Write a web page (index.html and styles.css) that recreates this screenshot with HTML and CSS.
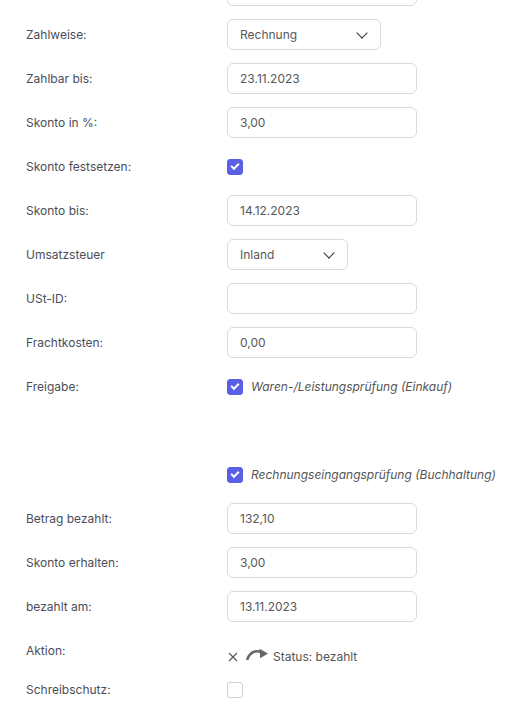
FILE: index.html
```html
<!DOCTYPE html>
<html lang="de">
<head>
    <meta charset="UTF-8">
    <meta name="viewport" content="width=device-width, initial-scale=1.0">
    <title>Rechnung bearbeiten</title>
    <link rel="stylesheet" href="styles.css">
</head>
<body>
    <div class="form">
        <div class="row">
            <label class="label"></label>
            <div class="field"></div>
        </div>

        <div class="row">
            <label class="label">Zahlweise:</label>
            <div class="field select wide">Rechnung <span class="chevron"></span></div>
        </div>

        <div class="row">
            <label class="label">Zahlbar bis:</label>
            <div class="field">23.11.2023</div>
        </div>

        <div class="row">
            <label class="label">Skonto in %:</label>
            <div class="field">3,00</div>
        </div>

        <div class="row">
            <label class="label">Skonto festsetzen:</label>
            <span class="check on"></span>
        </div>

        <div class="row">
            <label class="label">Skonto bis:</label>
            <div class="field">14.12.2023</div>
        </div>

        <div class="row">
            <label class="label">Umsatzsteuer</label>
            <div class="field select narrow">Inland <span class="chevron"></span></div>
        </div>

        <div class="row">
            <label class="label">USt-ID:</label>
            <div class="field"></div>
        </div>

        <div class="row">
            <label class="label">Frachtkosten:</label>
            <div class="field">0,00</div>
        </div>

        <div class="row">
            <label class="label">Freigabe:</label>
            <div class="check-line">
                <span class="check on"></span>
                <em>Waren-/Leistungsprüfung (Einkauf)</em>
            </div>
        </div>

        <div class="row"></div>

        <div class="row">
            <label class="label"></label>
            <div class="check-line">
                <span class="check on"></span>
                <em>Rechnungseingangsprüfung (Buchhaltung)</em>
            </div>
        </div>

        <div class="row">
            <label class="label">Betrag bezahlt:</label>
            <div class="field">132,10</div>
        </div>

        <div class="row">
            <label class="label">Skonto erhalten:</label>
            <div class="field">3,00</div>
        </div>

        <div class="row">
            <label class="label">bezahlt am:</label>
            <div class="field">13.11.2023</div>
        </div>

        <div class="row action-row">
            <label class="label">Aktion:</label>
            <div class="actions">
                <svg class="icon-x" width="10" height="10" viewBox="0 0 10 10">
                    <path d="M1 1 L9 9 M9 1 L1 9" stroke="#555" stroke-width="1.1" fill="none"/>
                </svg>
                <svg class="icon-redo" width="23" height="12" viewBox="0 0 23 12">
                    <path d="M1.5 11 C4 4 10 1.5 16 4.5" stroke="#666" stroke-width="2.6" fill="none" stroke-linecap="round"/>
                    <path d="M13.5 0.8 L22 5.5 L14.2 10.2 Z" fill="#666"/>
                </svg>
                <span>Status: bezahlt</span>
            </div>
        </div>

        <div class="row short">
            <label class="label">Schreibschutz:</label>
            <span class="check"></span>
        </div>
    </div>
</body>
</html>
```

FILE: styles.css
```css
body {
    margin: 0;
    padding: 0 0 0 26px;
    font-family: Inter, "Noto Sans", sans-serif;
    font-size: 12px;
    color: #4a4e5a;
    background: #fff;
}
.form {
    display: flex;
    flex-direction: column;
    gap: 13px;
    margin-top: -25px;
}
.row {
    display: flex;
    align-items: center;
    min-height: 31px;
    white-space: nowrap;
}
.label {
    width: 201px;
    flex-shrink: 0;
    line-height: 20px;
}
.field {
    box-sizing: border-box;
    width: 190px;
    height: 31px;
    padding: 0 12px;
    border: 1px solid #dadada;
    border-radius: 6px;
    display: flex;
    align-items: center;
    color: #585858;
}
.select {
    justify-content: space-between;
    padding-right: 14px;
}
.select.wide {
    width: 154px;
}
.select.narrow {
    width: 121px;
}
.chevron {
    width: 7px;
    height: 7px;
    border-right: 1.4px solid #333;
    border-bottom: 1.4px solid #333;
    transform: translateY(-2px) rotate(45deg);
}
.check {
    box-sizing: border-box;
    width: 16px;
    height: 16px;
    border: 1px solid #cfcfcf;
    border-radius: 3px;
    display: inline-flex;
    align-items: center;
    justify-content: center;
    flex-shrink: 0;
}
.check.on {
    background: #5b5fe4;
    border-color: #5b5fe4;
}
.check.on::after {
    content: "";
    width: 6px;
    height: 3px;
    border-left: 2px solid #fff;
    border-bottom: 2px solid #fff;
    transform: translateY(-1px) rotate(-45deg);
}
.check-line {
    display: flex;
    align-items: center;
    gap: 8px;
    color: #555;
}
.check-line em {
    font-style: italic;
}
.action-row {
    align-items: flex-start;
    min-height: 0;
}
.action-row .label {
    padding-top: 6px;
}
.actions {
    display: flex;
    align-items: center;
    gap: 8px;
    padding-top: 12px;
    line-height: 20px;
    color: #555;
}
.icon-x {
    margin-left: 1px;
}
.icon-redo {
    margin-right: -4px;
    margin-top: -6px;
}
.short {
    min-height: 20px;
}
```
